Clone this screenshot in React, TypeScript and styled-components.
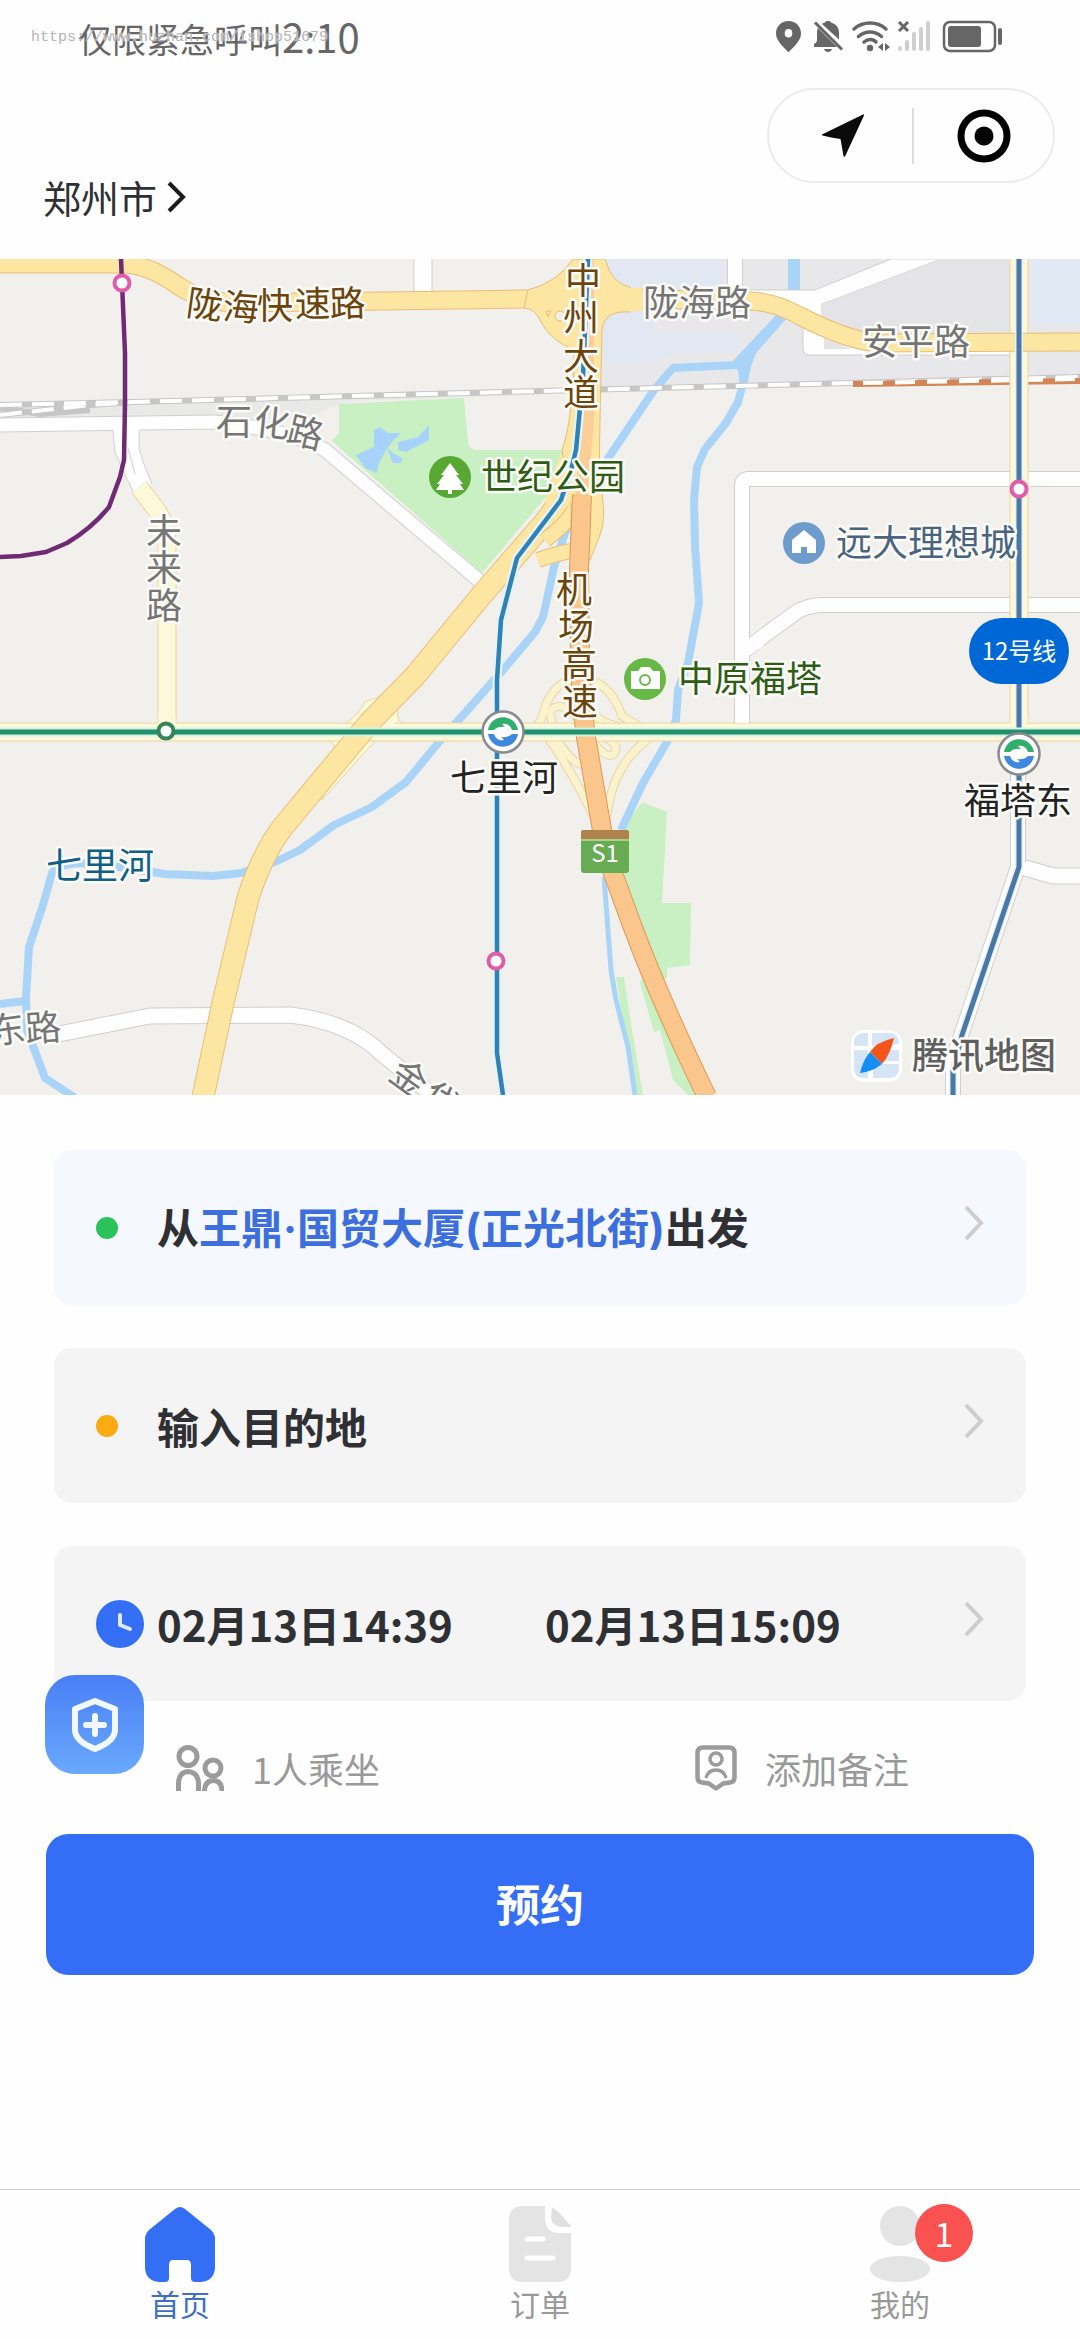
import styled, { createGlobalStyle } from "styled-components";

const GlobalStyle = createGlobalStyle`
  * {
    box-sizing: border-box;
  }
  body {
    margin: 0;
    background: #fefefe;
    font-family: "Noto Sans CJK SC", "Noto Sans", sans-serif;
    color: #2f3033;
  }
  button {
    font-family: inherit;
    color: inherit;
    border: none;
    background: none;
    padding: 0;
    cursor: pointer;
  }
  svg {
    display: block;
    flex-shrink: 0;
  }
`;

const StatusIcons = () => (
  <svg width="228" height="34" viewBox="773 20 228 34" fill="#666">
    <path
      fillRule="evenodd"
      d="M787.500 21c-7.200 0-12.500 5.500-12.500 12.300 0 7.200 6.500 13 12.500 18.900 6-5.900 12.500-11.700 12.500-18.900C800 26.500 794.700 21 787.500 21zm0 8a3.800 4.300 0 1 1 0 8.600 3.800 4.300 0 0 1 0-8.600z"
    />
    <path d="M817 28l19 19h-23v-3c2-1 3-2 3-5v-7c0-1.500.3-2.700 1-4zM821 24c1-1 2-1.300 3-1.500 0-2 6-2 6 0 5 1.500 8 5 8 10v7zM823 49h8c-1 4-7 4-8 0z" />
    <path d="M814 22.500l27 27" stroke="#666" strokeWidth="3" />
    <g fill="none" stroke="#666" strokeWidth="3.500" strokeLinecap="round">
      <path d="M853 29c9-8 23-8 32 0M857.500 36.500c7-6 16-6 23 0M863 42c4-3.500 9-3.500 12 0" />
    </g>
    <circle cx="869" cy="48" r="3.200" />
    <path d="M882 43v8l-5-4zM884 43v8l5-4z" />
    <path d="M898 22l9 9M907 22l-9 9" stroke="#666" strokeWidth="3" />
    <g stroke="#cfcfcf" strokeWidth="4" strokeLinecap="round">
      <path d="M899 48v1M906 42v7M913 34v15M920 29v20M927 23v26" />
    </g>
    <rect x="943" y="22" width="51" height="29" rx="6" fill="none" stroke="#666" strokeWidth="2.500" />
    <rect x="947" y="26" width="33" height="21" rx="3" />
    <rect x="997" y="28" width="4" height="17" rx="2" />
  </svg>
);

const Station = ({ x, y }: { x: number; y: number }) => (
  <g transform={`translate(${x} ${y})`}>
    <circle r="20.500" fill="#fff" stroke="#8b8b8f" strokeWidth="2.500" />
    <path d="M-15 -2C-12 -19 12 -19 15 -2H9C7 -8 2 -9 -1 -8L2 -5Q-5 -6 -9 -2z" fill="#2fae6c" />
    <path d="M15 2C12 19 -12 19 -15 2H-9C-7 8 -2 9 1 8L-2 5Q5 6 9 2z" fill="#3f88e0" />
  </g>
);

const Stop = ({ x, y, color = "#df5cab" }: { x: number; y: number; color?: string }) => (
  <circle cx={x} cy={y} r="7.500" fill="#fff" stroke={color} strokeWidth="4" />
);

type RoadProps = { d: string; w: number; fill: string; edge: string };

const Road = ({ d, w, fill, edge }: RoadProps) => (
  <g fill="none" strokeLinejoin="round">
    <path d={d} stroke={edge} strokeWidth={w + 2} />
    <path d={d} stroke={fill} strokeWidth={w} />
  </g>
);

const white = { fill: "#fefefe", edge: "#cfcfcf" };
const pale = { fill: "#fdf8da", edge: "#ecd6a0" };
const yellow = { fill: "#fde5a2", edge: "#e8bd78" };
const orange = { fill: "#fbc68c", edge: "#d99a58" };

const MapView = () => (
  <MapSvg viewBox="0 259 1080 836" role="img" aria-label="地图">
    <rect y="259" width="1080" height="836" fill="#f1f0ed" />

    {/* districts */}
    <path d="M598 259H1080V378L850 384L598 391z" fill="#e8e7e9" />
    <path d="M606 259h118v33h-70v40h84v20h-50l-48 12h-36z" fill="#e1e8f1" />
    <path d="M1032 259h48v65h-48z" fill="#e0e9f4" />
    <path d="M0 402L540 390V395L350 401L300 419L0 420z" fill="#e9e9e8" />
    <path
      d="M339 404L464 398L468 442Q469 450 477 450H565L550 492L482 573L332 441L339 433z"
      fill="#c9f0c2"
    />
    <path
      d="M374 430L380 427L388 433L401 433L392 442L386 450L379 463L377 473L365 468L356 455L374 447z M398 442L418 437L429 425V440L406 452L398 450z M387 448L393 453L402 458L401 463L393 463z"
      fill="#a6d2fb"
    />
    <path
      d="M642 802L667 812L662 903H691L690 965L667 968V978L658 982L618 873L621 830z M640 983L654 1032L660 1030L673 1080L688 1095H700L642 978z M616 977H624L632 1030L643 1095H634z"
      fill="#c9f0c2"
    />

    {/* rivers */}
    <g fill="none" stroke="#a9d4f8" strokeWidth="8" strokeLinejoin="round">
      <path d="M794 259V292" strokeWidth="12" />
      <path d="M782 315L743 362L736 365L673 368L654 390L609 457L566 530L554 567L543 617L535 632L503 670L456 723L439 742L406 782L372 807L334 825L300 850L275 862L241 873L213 876L165 874L120 867L79 863Q57 865 52 873L43 905L29 947L26 997L27 1030L45 1078L74 1097M0 1004L24 1001" />
      <path d="M744 360L744 380L738 402L726 423L705 449L697 467L694 500L695 545L699 603L688 663L678 690L676 720L667 742L643 783L621 830" />
      <path d="M604 877L611 970L616 1000L628 1047L635 1095" strokeWidth="5" />
    </g>
    <path d="M775 316L787 318L757 352Q750 365 748 382H739Q740 368 732 362z" fill="#a9d4f8" />

    {/* side streets */}
    <Road d="M423 257V300" w={17} {...white} />
    <Road d="M735 257V300" w={14} {...white} />
    <path
      d="M640 290H815L891 259H941L822 304V334L880 351L1010 339V355H812Q803 356 803 348V322L760 300z"
      fill="#fefefe"
      stroke="#cfcfcf"
    />
    <path d="M822 304L941 259H1010V334H870L822 318z" fill="#e4e3e6" />
    <path d="M824 338L852 349H824z" fill="#e4e3e6" />
    <Road d="M1080 605H820Q805 606 795 613L742 652" w={14} {...white} />
    <Road d="M742 724V486Q742 479 749 479H1080" w={14} {...white} />
    <path d="M742 690V655M742 652L760 640M1060 605H840" stroke="#fefefe" strokeWidth="14" fill="none" />
    <Road d="M0 425L215 422Q290 430 325 450L482 583" w={13} {...white} />
    <path
      d="M113 430L115 452L125 475L133 491L152 484L143 462L139 448L139 430L150 422H100z"
      fill="#fefefe"
    />
    <path d="M113 431L115 452L125 475L133 491M152 484L143 462L139 448V431M128 448L135 474" fill="none" stroke="#cfcfcf" />
    <Road d="M54 1035L150 1016L290 1015Q350 1022 382 1054L440 1101" w={15} {...white} />
    <Road d="M1022 867L1053 876H1082" w={15} {...white} />
    <Road d="M1018 741V867L956 1050L953 1070V1097" w={14} {...white} />
    <path d="M1012 866L1036 871" stroke="#fefefe" strokeWidth="13" />

    {/* railway */}
    <g fill="none">
      <path d="M0 405L134 402L540 391L850 383L1080 377M0 415L90 405L134 402M0 408L40 414L90 410" stroke="#c6c6c6" strokeWidth="6" />
      <path
        d="M0 405L134 402L540 391L850 383L1080 377M0 415L90 405L134 402"
        stroke="#fff"
        strokeWidth="4"
        strokeDasharray="22 10"
      />
      <path d="M853 384L1080 381" stroke="#d58456" strokeWidth="6" />
      <path d="M863 383L1080 379" stroke="#fff" strokeWidth="4" strokeDasharray="20 12" />
    </g>

    {/* main streets */}
    <Road d="M139 487L158 512Q167 525 167 545V726" w={17} {...pale} />
    <Road d="M1019 257V741" w={17} {...pale} />
    <path
      d="M345 723Q356 718 365 702L382 696L398 710Q396 722 404 723H455V741H375L322 800L334 752Q336 742 328 741z"
      fill="#fdf8da"
      stroke="#ecd6a0"
    />
    <g fill="none">
      <g stroke="#ecd6a0" strokeWidth="9">
        <path d="M530 733Q542 723 545 707Q555 680 580 678Q610 680 622 716L650 733M548 738Q575 775 600 830M650 738Q610 765 606 825M560 735C535 705 565 690 590 735C610 775 628 745 605 738M552 730C565 755 575 765 586 765M590 710Q600 725 628 728" />
      </g>
      <g stroke="#fbf3cd" strokeWidth="7">
        <path d="M530 733Q542 723 545 707Q555 680 580 678Q610 680 622 716L650 733M548 738Q575 775 600 830M650 738Q610 765 606 825M560 735C535 705 565 690 590 735C610 775 628 745 605 738M552 730C565 755 575 765 586 765M590 710Q600 725 628 728" />
      </g>
    </g>
    <Road d="M-2 732H1082" w={17} {...pale} />
    <path d="M167 716V736M1019 716V736M375 716H395" stroke="#fdf8da" strokeWidth="17" />
    <path d="M742 715V723" stroke="#fefefe" strokeWidth="14" />

    {/* expressways */}
    <Road d="M588 385L586 430Q580 478 545 522L480 597L415 676L370 722L340 758L282 828Q262 855 248 898L223 1003L203 1097" w={21} {...yellow} />
    <Road d="M538 560Q566 550 578 551M545 540Q573 520 578 500" w={14} {...yellow} />
    <Road d="M-2 264L125 264Q150 265 180 287Q205 303 240 303L530 299H640L750 301Q775 302 800 316Q850 342 880 343L1082 342" w={17} {...yellow} />
    <path
      d="M528 290Q558 282 573 259H605Q612 284 630 287V312Q604 310 602 330L600 420L599 480Q608 515 600 535L590 560H571V505L562 450Q573 420 574 350Q550 340 541 322Q535 308 524 308z"
      fill="#fde5a2"
      stroke="#e8bd78"
    />
    <path d="M529 291h20v17h-24zM620 288h22v23h-22zM561 452L573 500L555 520L545 500z" fill="#fde5a2" />
    <circle cx="560" cy="316" r="5" fill="#f1eee4" stroke="#e8bd78" />
    <path d="M546 311l5 0l-3 6z" fill="none" stroke="#e8bd78" />
    <path d="M588 259V420L581 500" stroke="#fbce97" strokeWidth="12" fill="none" />
    <Road d="M582 495L579 570L580 660Q582 710 586 737L602 830Q606 855 614 876L632 925Q660 1000 707 1097" w={18} {...orange} />

    {/* metro lines */}
    <g fill="none" strokeLinejoin="round">
      <path d="M588 259L583 377L576 450L571 470L561 500L517 558L501 620L497 680V1053L503 1095" stroke="#e5f3f8" strokeWidth="9" />
      <path d="M588 259L583 377L576 450L571 470L561 500L517 558L501 620L497 680V1053L503 1095" stroke="#2f82b3" strokeWidth="4.500" />
      <path d="M1019 259V867L962 1035L953 1070V1095" stroke="#e9f0f5" strokeWidth="8" />
      <path d="M1019 259V867L962 1035L953 1070V1095" stroke="#4878a6" strokeWidth="5" />
      <path d="M0 732H1080" stroke="#d5f3e6" strokeWidth="9" />
      <path d="M0 732H1080" stroke="#22916b" strokeWidth="5" />
      <path d="M121 259L125 353V403L124 460L120 477L109 507Q92 528 67 543L46 552L21 556L0 557" stroke="#702a75" strokeWidth="4.500" />
    </g>
    <Stop x={122} y={283} />
    <Stop x={1019} y={489} />
    <Stop x={496} y={961} />
    <Stop x={166} y={731} color="#33855a" />
    <Station x={503} y={732} />
    <Station x={1019} y={754} />

    {/* places */}
    <circle cx="450" cy="477" r="21" fill="#58a933" />
    <path d="M450 463l9 12h-3l7 9h-3l4 6h-12v4h-4v-4h-12l4-6h-3l7-9h-3z" fill="#fff" />
    <circle cx="804" cy="543" r="21" fill="#6d9bcc" />
    <path d="M804 530l12 10v13h-9v-6h-6v6h-9v-13z" fill="#fff" />
    <circle cx="645" cy="679" r="21" fill="#67b847" />
    <path d="M631 671h7l3-4h9l3 4h7v18h-29z" fill="#fff" />
    <circle cx="645" cy="680" r="5" fill="#fff" stroke="#67b847" strokeWidth="2" />

    <rect x="581" y="830" width="48" height="43" rx="3" fill="#67ab52" />
    <path d="M581 839v-6q0-3 3-3h42q3 0 3 3v6z" fill="#b0824c" />
    <path d="M581 840h48" stroke="#f2f0c8" strokeWidth="1" />
    <PlainLabel x="605" y="862">S1</PlainLabel>

    <Label fill="#6b450c" x="203 240 275 313 348" y="315 319 319 317 317" rotate="8 4 0 -1 -2">陇海快速路</Label>
    <Label fill="#757575" x="234 271 303" y="435 434 441" rotate="0 6 14">石化路</Label>
    <Label fill="#757575" x="164 164 164" y="545 581 619">未来路</Label>
    <Label fill="#6b450c" x="583 581 581 581" y="294 331 370 406">中州大道</Label>
    <Label fill="#6b450c" x="574 576 579 580" y="603 640 678 715">机场高速</Label>
    <Label fill="#757575" x="697" y="316">陇海路</Label>
    <Label fill="#757575" x="916" y="355">安平路</Label>
    <Label fill="#2f5c14" x="553" y="490">世纪公园</Label>
    <Label fill="#4a637f" x="926" y="556">远大理想城</Label>
    <Label fill="#2f5c14" x="750" y="692">中原福塔</Label>
    <Label fill="#232323" x="504" y="791">七里河</Label>
    <Label fill="#232323" x="1018" y="814">福塔东</Label>
    <Label fill="#105f86" x="100" y="879">七里河</Label>
    <Label fill="#757575" x="9 44" y="1045 1042" rotate="-8 -4">东路</Label>
    <Label fill="#757575" x="405 437" y="1078 1101" rotate="36 36">金岱</Label>

    <rect x="969" y="618" width="100" height="66" rx="33" fill="#0068d6" />
    <PlainLabel x="1019" y="660">12号线</PlainLabel>

    <rect x="851" y="1030" width="51" height="52" rx="13" fill="#fff" />
    <path d="M854 1043q0-10 10-10h4v13h-14zM872 1033h16q11 0 11 11l-14 2h-13zM854 1050h14v28h-4q-10 0-10-10zM873 1064l26 0v4q0 10-10 10h-16zM888 1050h11v11h-16z" fill="#d6e5f6" />
    <path d="M894 1038Q876 1042 870 1052L882 1064Q890 1055 894 1038z" fill="#f2561b" />
    <path d="M860 1073Q863 1060 870 1052L882 1064Q872 1072 860 1073z" fill="#148df5" />
    <Label fill="#5f5f5f" x="984" y="1069" $medium>腾讯地图</Label>
  </MapSvg>
);

const Chevron = () => (
  <ChevronSvg width="20" height="36" viewBox="0 0 20 36" aria-hidden="true">
    <path d="M2 2L17 18L2 34" fill="none" stroke="#cdcdcd" strokeWidth="4" />
  </ChevronSvg>
);

const App = () => {
  return (
    <Page>
      <GlobalStyle />
      <StatusBar>
        <span>
          仅限紧急呼叫<Clock>2:10</Clock>
        </span>
        <StatusIcons />
        <Watermark>https://www.huzhan.com/ishop51679</Watermark>
      </StatusBar>

      <Header>
        <City type="button">
          郑州市
          <svg width="20" height="32" viewBox="0 0 20 32" aria-hidden="true">
            <path d="M2 2L16 16L2 30" fill="none" stroke="#1c1c1c" strokeWidth="4" />
          </svg>
        </City>
        <Capsule>
          <CapsuleButton type="button" aria-label="定位">
            <svg width="44" height="44" viewBox="0 0 44 44">
              <path d="M43 1.500L24 42.500Q23 43 22.500 42L19.500 25Q10 23.500 1.500 21.500Q0 20.500 2 20L42 .5Q43.500 0 43 1.500z" fill="#0b0b0b" />
            </svg>
          </CapsuleButton>
          <CapsuleButton type="button" aria-label="关闭">
            <svg width="54" height="54" viewBox="0 0 54 54">
              <circle cx="27" cy="27" r="23" fill="none" stroke="#000" strokeWidth="7" />
              <circle cx="27" cy="27" r="9.500" />
            </svg>
          </CapsuleButton>
        </Capsule>
      </Header>

      <MapView />

      <Form>
        <Card type="button" $active>
          <Marker>
            <Dot $color="#2bc25c" />
          </Marker>
          <CardText>
            <span>
              从<em>王鼎·国贸大厦(正光北街)</em>出发
            </span>
          </CardText>
          <Chevron />
        </Card>
        <Card type="button">
          <Marker>
            <Dot $color="#f9ab10" />
          </Marker>
          <CardText>输入目的地</CardText>
          <Chevron />
        </Card>
        <TimeBox>
          <Card type="button">
            <Marker>
              <svg width="48" height="48" viewBox="0 0 48 48">
                <circle cx="24" cy="24" r="24" fill="#346ef5" />
                <path d="M24 15V25L34 29" fill="none" stroke="#dfeaff" strokeWidth="4" strokeLinecap="round" strokeLinejoin="round" />
              </svg>
            </Marker>
            <CardText>
              <span>02月13日14:39</span>
              <span>02月13日15:09</span>
            </CardText>
            <Chevron />
          </Card>
          <SafetyButton type="button" aria-label="安全中心">
            <svg width="48" height="56" viewBox="0 0 48 56" fill="none" stroke="#f2f8ff" strokeLinejoin="round" strokeLinecap="round">
              <path d="M24 4L44 12V33Q44 44 24 52Q4 44 4 33V12z" strokeWidth="6" />
              <path d="M24 19V37M15 28H33" strokeWidth="6" />
            </svg>
          </SafetyButton>
        </TimeBox>

        <Options>
          <Option type="button">
            <svg width="48" height="46" viewBox="0 0 48 46" fill="none" stroke="#9b9b9b" strokeWidth="5">
              <circle cx="12" cy="11.500" r="9" />
              <circle cx="37" cy="23" r="8" />
              <path d="M2.500 46V38Q3 27 12 26.500Q22 27 22.500 38V46M28.500 46Q29 35.500 37.500 35.500Q45.500 35.500 46 46" />
            </svg>
            1人乘坐
          </Option>
          <Option type="button">
            <svg width="42" height="46" viewBox="0 0 42 46" fill="none" stroke="#9b9b9b" strokeWidth="4.500" strokeLinejoin="round">
              <path d="M8 2.500H34Q39.500 2.500 39.500 8V32Q39.500 37 35 37.500L28 38.500L21 43.500L14 38.500L7 37.500Q2.500 37 2.500 32V8Q2.500 2.500 8 2.500z" />
              <circle cx="21" cy="14" r="6" strokeWidth="3.500" />
              <path d="M11 33Q13 25 21 25Q29 25 31 33" strokeWidth="3.500" />
            </svg>
            添加备注
          </Option>
        </Options>
        <Submit type="submit">预约</Submit>
      </Form>

      <TabBar>
        <Tab href="#home" $active>
          <svg width="70" height="76" viewBox="0 0 70 76">
            <path d="M30 3Q35-1 40 3L66 24Q70 28 70 33V62Q69 75 56 76H50Q46 76 46 72V59Q46 54 42 54H28Q24 54 24 59V72Q24 76 20 76H14Q1 75 0 62V33Q0 28 4 24z" fill="#346ef5" />
          </svg>
          首页
        </Tab>
        <Tab href="#orders">
          <svg width="62" height="76" viewBox="0 0 62 76">
            <path d="M14 0H36V13Q37 27 50 27H62V62Q62 76 48 76H14Q0 76 0 62V14Q0 0 14 0z" fill="#e4e4e4" />
            <path d="M43 1Q48 4 54 11Q60 17 62 21H52Q43 20 42 12z" fill="#e0e0e0" />
            <path d="M18 33H34M18 52H44" stroke="#fff" strokeWidth="5" strokeLinecap="round" />
          </svg>
          订单
        </Tab>
        <Tab href="#mine">
          <TabIcon>
            <svg width="60" height="76" viewBox="0 0 60 76" fill="#e4e4e4">
              <circle cx="30" cy="20" r="20" />
              <path d="M30 50C48 50 60 56 60 63S48 76 30 76S0 70 0 63S12 50 30 50z" />
            </svg>
            <Badge>1</Badge>
          </TabIcon>
          我的
        </Tab>
      </TabBar>
    </Page>
  );
};

export default App;

const Page = styled.div`
  display: flex;
  flex-direction: column;
  min-height: 100vh;
`;

const StatusBar = styled.div`
  position: relative;
  display: flex;
  align-items: center;
  justify-content: space-between;
  height: 76px;
  padding: 0 78px 2px;
  font-size: 34px;
  line-height: 48px;
  color: #666;
`;

const Clock = styled.time`
  font-size: 40px;
`;

const Watermark = styled.span`
  position: absolute;
  left: 31px;
  top: 28px;
  font-family: "Liberation Mono", monospace;
  font-size: 15px;
  line-height: 20px;
  color: #b4b4b4;
  text-shadow: 0 0 2px #fff;
`;

const Header = styled.header`
  display: flex;
  justify-content: space-between;
  height: 183px;
  padding: 12px 25px 38px 43px;
`;

const City = styled.button`
  display: flex;
  align-items: center;
  align-self: flex-end;
  gap: 10px;
  font-size: 38px;
  line-height: 48px;
`;

const Capsule = styled.div`
  display: flex;
  align-items: center;
  width: 288px;
  height: 95px;
  padding-left: 4px;
  border: 2px solid #ebebeb;
  border-radius: 48px;
`;

const CapsuleButton = styled.button`
  display: flex;
  flex: 1;
  align-items: center;
  justify-content: center;
  height: 56px;
  & + & {
    border-left: 2px solid #dedede;
  }
`;

const MapSvg = styled.svg`
  width: 100%;
  height: auto;
`;

const Label = styled.text<{ $medium?: boolean }>`
  font-size: 36px;
  font-weight: ${({ $medium }) => ($medium ? 500 : 400)};
  text-anchor: middle;
  stroke: #fbfbf8;
  stroke-width: 5px;
  stroke-linejoin: round;
  paint-order: stroke;
`;

const PlainLabel = styled.text`
  font-size: 24px;
  text-anchor: middle;
  fill: #fff;
`;

const Form = styled.form`
  display: flex;
  flex-direction: column;
  gap: 43px;
  padding: 55px 54px 0;
`;

const Card = styled.button<{ $active?: boolean }>`
  display: flex;
  align-items: center;
  width: 100%;
  height: 155px;
  padding: 0 42px;
  border-radius: 18px;
  background: ${({ $active }) => ($active ? "#f5f8fe" : "#f4f4f4")};
  text-align: left;
`;

const Marker = styled.span`
  width: 61px;
`;

const Dot = styled.span<{ $color: string }>`
  display: block;
  width: 22px;
  height: 22px;
  border-radius: 50%;
  background: ${({ $color }) => $color};
`;

const CardText = styled.span`
  display: flex;
  flex: 1;
  font-size: 42px;
  font-weight: 700;
  line-height: 60px;
  em {
    font-family: Inter, "Noto Sans CJK SC", sans-serif;
    font-style: normal;
    color: #3c6fdd;
  }
  span + span {
    margin-left: 92px;
  }
`;

const ChevronSvg = styled.svg`
  margin-bottom: 10px;
`;

const TimeBox = styled.div`
  position: relative;
`;

const SafetyButton = styled.button`
  position: absolute;
  left: -9px;
  bottom: -73px;
  display: flex;
  align-items: center;
  justify-content: center;
  width: 99px;
  height: 99px;
  border-radius: 30px;
  background: linear-gradient(#497ff6, #69a9fc);
`;

const Options = styled.div`
  display: flex;
  align-items: center;
  justify-content: space-between;
  height: 133px;
  margin: -43px 0;
  padding: 0 117px 0 122px;
`;

const Option = styled.button`
  display: flex;
  align-items: center;
  gap: 28px;
  font-size: 36px;
  line-height: 48px;
  color: #999;
`;

const Submit = styled.button`
  height: 141px;
  margin: 0 -8px;
  padding-bottom: 4px;
  border-radius: 22px;
  background: #346ef6;
  font-size: 44px;
  font-weight: 700;
  color: #fff;
`;

const TabBar = styled.nav`
  display: flex;
  margin-top: auto;
  border-top: 1px solid #cfcfcf;
`;

const Tab = styled.a<{ $active?: boolean }>`
  display: flex;
  flex: 1;
  flex-direction: column;
  align-items: center;
  padding: 16px 0;
  font-size: 30px;
  line-height: 42px;
  text-decoration: none;
  color: ${({ $active }) => ($active ? "#3f6fc4" : "#999")};
`;

const TabIcon = styled.span`
  position: relative;
`;

const Badge = styled.span`
  position: absolute;
  top: -2px;
  left: 45px;
  width: 58px;
  height: 58px;
  border-radius: 50%;
  background: #fa5151;
  font-size: 34px;
  line-height: 58px;
  text-align: center;
  color: #fff;
`;
